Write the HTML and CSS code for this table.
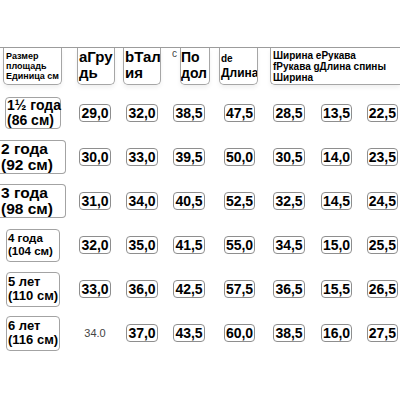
FILE: index.html
```html
<!DOCTYPE html>
<html lang="ru">
<head>
<meta charset="utf-8">
<link rel="stylesheet" href="styles.css">
</head>
<body>
<div class="chart">
  <div class="hcell h0"><div class="hbox small">Размер<br>площадь<br>Единица см</div></div>
  <div class="hcell ha"><div class="hbox big w38">аГру<br>дь</div></div>
  <div class="hcell hb"><div class="hbox big w38">bТал<br>ия</div></div>
  <div class="hcell hc"><span class="sup">c</span><div class="hbox big w30 narrow">По<br>дол</div></div>
  <div class="hcell hd"><div class="hbox w39 mixed"><span class="de">de</span><br><span class="dl">Длина</span></div></div>
  <div class="hcell hefg"><div class="hbox small wide">Ширина еРукава<br>fРукава gДлина спины<br>Ширина</div></div>

  <div class="lab r1"><div class="lbox">1½ года<br>(86 см)</div></div>
  <div class="v">29,0</div><div class="v">32,0</div><div class="v">38,5</div><div class="v">47,5</div><div class="v">28,5</div><div class="v">13,5</div><div class="v last">22,5</div>

  <div class="lab r2"><div class="lbox cut">2 года<br>(92 см)</div></div>
  <div class="v">30,0</div><div class="v">33,0</div><div class="v">39,5</div><div class="v">50,0</div><div class="v">30,5</div><div class="v">14,0</div><div class="v last">23,5</div>

  <div class="lab r3"><div class="lbox cut">3 года<br>(98 см)</div></div>
  <div class="v">31,0</div><div class="v">34,0</div><div class="v">40,5</div><div class="v">52,5</div><div class="v">32,5</div><div class="v">14,5</div><div class="v last">24,5</div>

  <div class="lab r4"><div class="lbox">4 года<br>(104 см)</div></div>
  <div class="v">32,0</div><div class="v">35,0</div><div class="v">41,5</div><div class="v">55,0</div><div class="v">34,5</div><div class="v">15,0</div><div class="v last">25,5</div>

  <div class="lab r5"><div class="lbox">5 лет<br>(110 см)</div></div>
  <div class="v">33,0</div><div class="v">36,0</div><div class="v">42,5</div><div class="v">57,5</div><div class="v">36,5</div><div class="v">15,5</div><div class="v last">26,5</div>

  <div class="lab r6"><div class="lbox">6 лет<br>(116 см)</div></div>
  <div class="plain">34.0</div><div class="v">37,0</div><div class="v">43,5</div><div class="v">60,0</div><div class="v">38,5</div><div class="v">16,0</div><div class="v last">27,5</div>
</div>
</body>
</html>
```
FILE: styles.css
```css
html, body {
  margin: 0;
  padding: 0;
  background: #fff;
  overflow: hidden;
}
body {
  font-family: "Liberation Sans", Arial, sans-serif;
  color: #000;
  width: 400px;
  height: 400px;
}
.chart {
  margin-top: 47px;
  border-top: 1px solid #9c9c9c;
  display: grid;
  grid-template-columns: 71px 48px 46px 48px 53px 46px 49px 39px;
  grid-template-rows: 43px repeat(6, 44px);
  align-items: center;
}
.hcell {
  align-self: start;
  display: flex;
  align-items: flex-start;
}
.hbox {
  box-sizing: border-box;
  height: 37px;
  border: 1px solid #a6a6a6;
  border-top: none;
  border-radius: 0 0 5px 5px;
  font-weight: bold;
  white-space: nowrap;
  overflow: hidden;
  box-shadow: 0 3px 4px rgba(0, 0, 0, 0.06);
}
.small {
  font-size: 9px;
  line-height: 10px;
  padding: 3px 0 0 2px;
}
.big {
  font-size: 15px;
  line-height: 16px;
  padding: 1px 0 0 1px;
}
.narrow {
  font-size: 14px;
  padding-left: 0;
}
.w38 { width: 38px; }
.w30 { width: 30px; }
.w39 { width: 39px; }
.h0 .hbox { width: 59px; margin-left: 3px; }
.ha .hbox { margin-left: 6px; }
.hb .hbox { margin-left: 4px; }
.hc { margin-left: 7px; }
.sup {
  font-size: 10px;
  color: #444;
  width: 8px;
  line-height: 12px;
}
.hd .hbox { margin-left: 6px; }
.mixed {
  padding: 3px 0 0 1px;
  line-height: 12px;
}
.de { font-size: 10px; }
.dl { font-size: 12px; line-height: 16px; }
.hefg { grid-column: 6 / span 3; }
.hefg .hbox {
  margin-left: 4px;
  width: 130px;
  font-size: 10px;
  line-height: 11px;
  padding: 2px 0 0 2px;
  border-right: none;
  border-radius: 0 0 0 5px;
}
.lab { display: flex; }
.lbox {
  box-sizing: border-box;
  border: 1px solid #a3a3a3;
  border-radius: 4px;
  font-weight: bold;
  white-space: nowrap;
  display: flex;
  flex-direction: column;
  justify-content: center;
}
.r1 .lbox { margin-left: 5px; width: 56px; height: 32px; font-size: 14px; line-height: 15px; padding-left: 1px; }
.r2 .lbox, .r3 .lbox { width: 66px; height: 34px; font-size: 15.5px; line-height: 16px; padding-left: 1px; }
.cut { border-left: none; border-radius: 0 4px 4px 0; }
.r4 .lbox { margin-left: 6px; width: 54px; height: 33px; font-size: 11.5px; line-height: 13px; padding-left: 1px; }
.r5 .lbox, .r6 .lbox { margin-left: 6px; width: 54px; height: 35px; font-size: 13px; line-height: 14px; padding-left: 1px; }
.v {
  justify-self: center;
  box-sizing: border-box;
  height: 18px;
  border: 1px solid #8e8e8e;
  border-radius: 4px;
  font-size: 14px;
  font-weight: bold;
  line-height: 16px;
  padding: 0 1px;
}
.last {
  justify-self: end;
  margin-right: 2px;
}
.plain {
  justify-self: center;
  font-size: 11px;
  color: #444;
}
```
